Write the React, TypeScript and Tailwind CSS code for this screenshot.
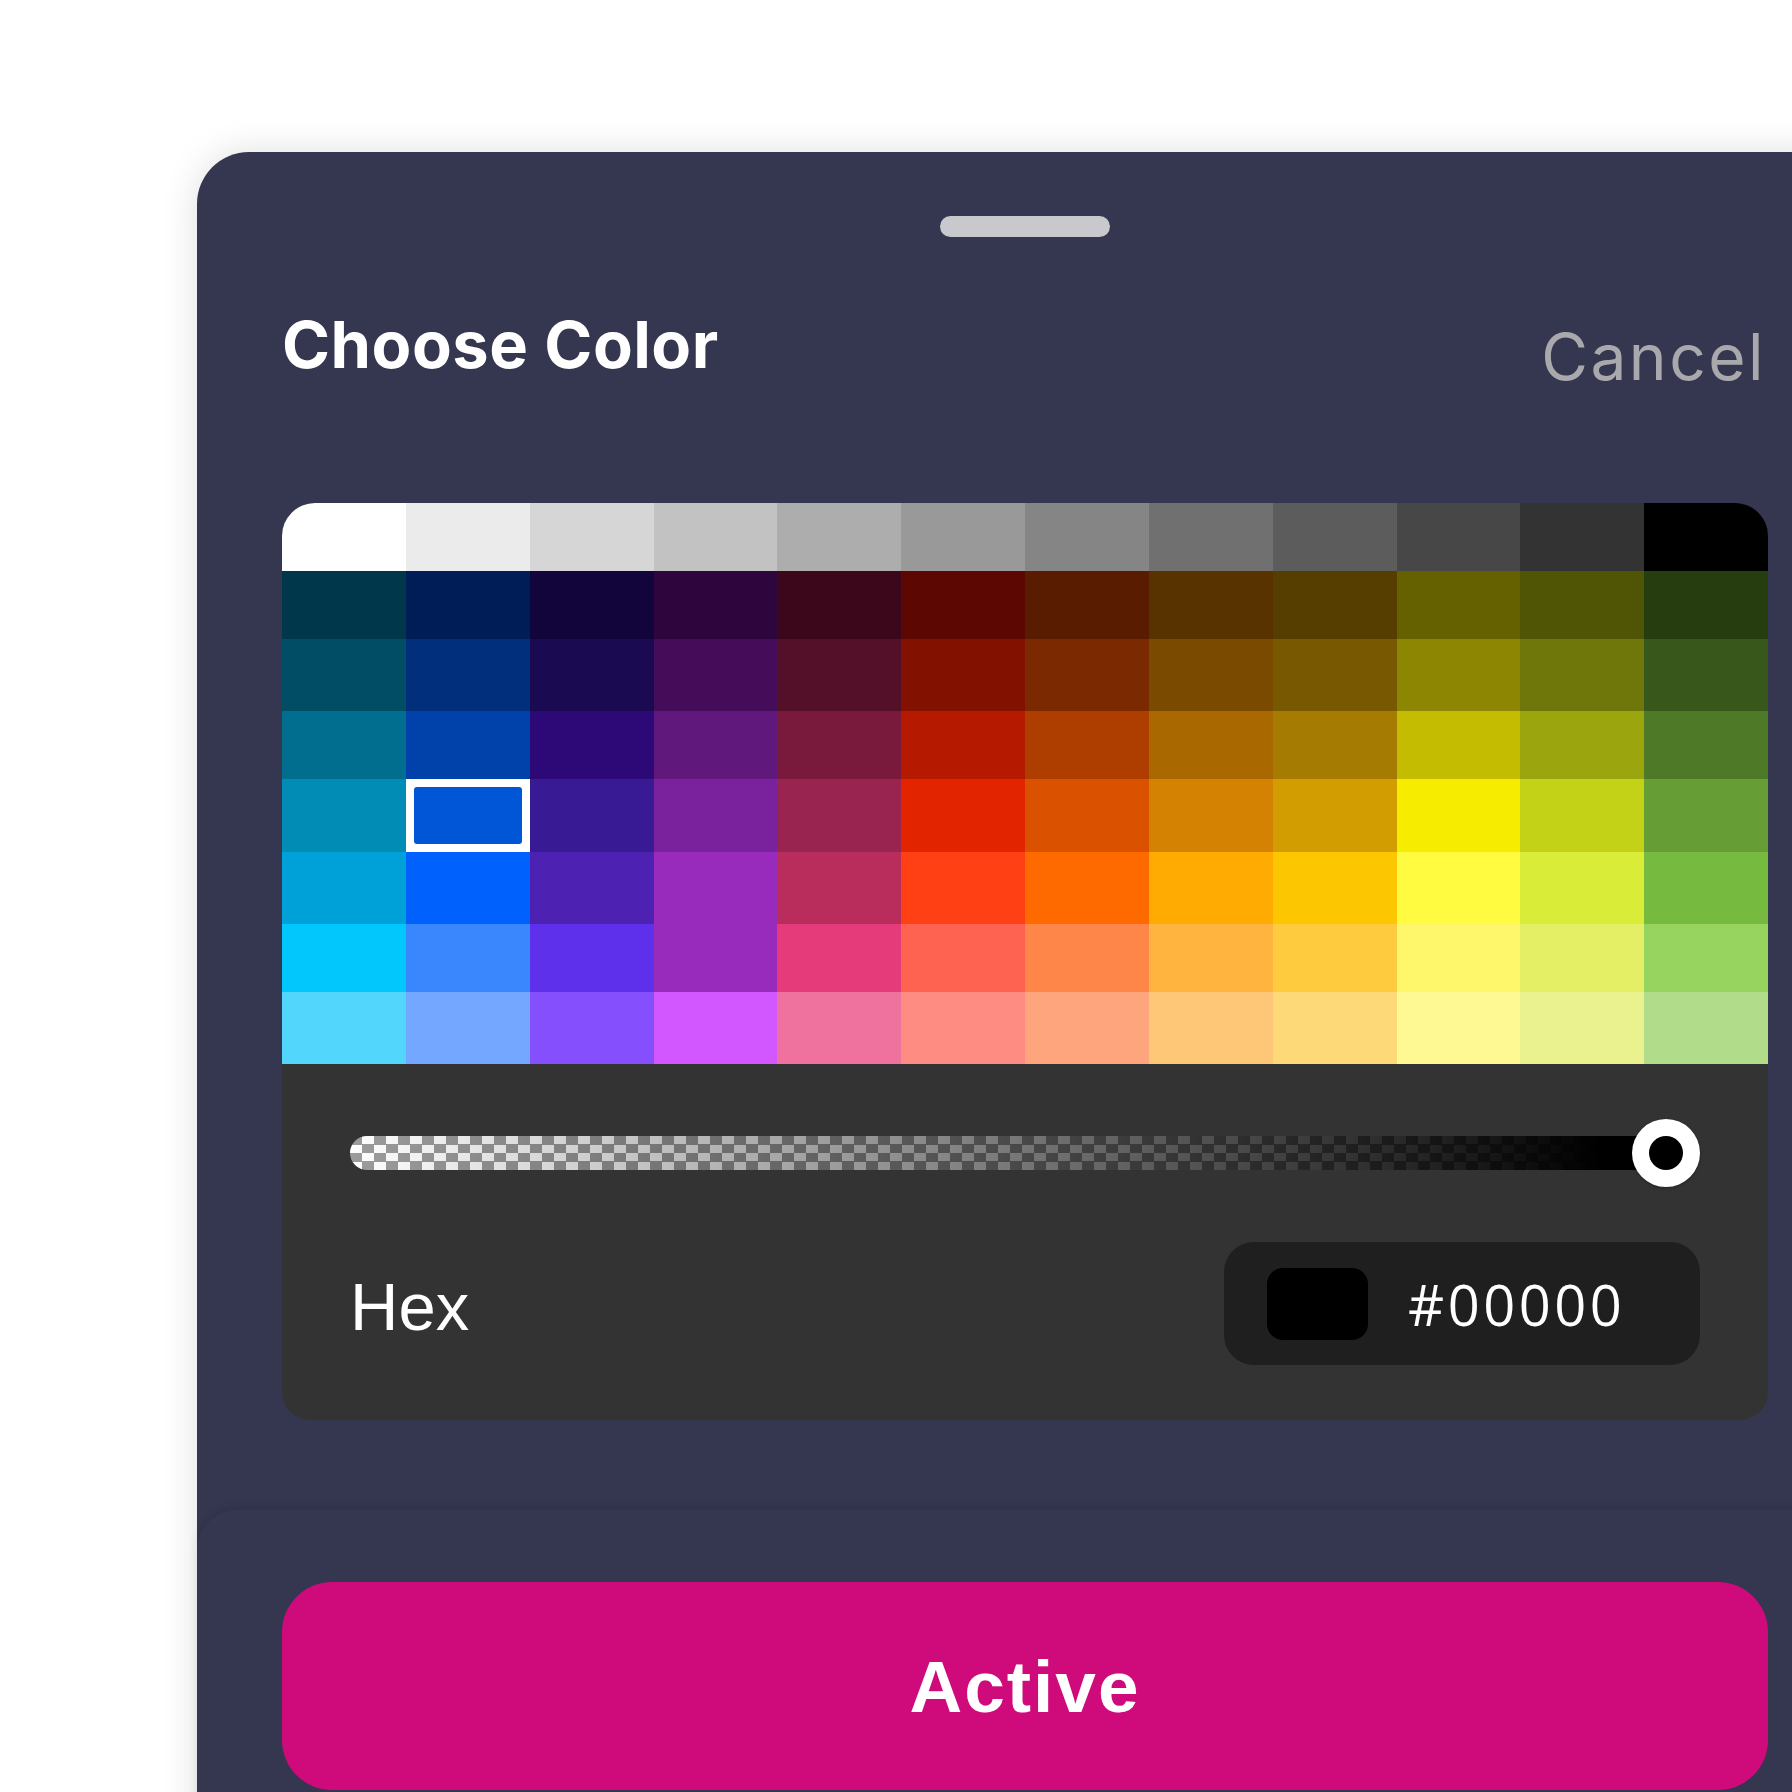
import React from "react";

const GRAY = ["#FFFFFF", "#EBEBEB", "#D6D6D6", "#C2C2C2", "#ADADAD", "#999999", "#858585", "#707070", "#5C5C5C", "#474747", "#333333", "#000000"];
const ROWS: string[][] = [
  ["#00374A", "#011D57", "#11053B", "#2E063D", "#3C071B", "#5C0701", "#5A1C00", "#583300", "#563D00", "#666100", "#4F5504", "#263E0F"],
  ["#004D65", "#012F7B", "#1A0A52", "#450D59", "#551029", "#831100", "#7B2900", "#7A4A00", "#785800", "#8D8602", "#6F760A", "#38571A"],
  ["#016E8F", "#0042A9", "#2C0977", "#61187C", "#791A3D", "#B51A00", "#AD3E00", "#A96800", "#A67B01", "#C4BC00", "#9BA50E", "#4E7A27"],
  ["#008CB4", "#0056D6", "#371A94", "#7A219E", "#99244F", "#E22400", "#DA5100", "#D38301", "#D19D01", "#F5EC00", "#C3D117", "#669D34"],
  ["#00A1D8", "#0061FD", "#4D22B2", "#982ABC", "#B92D5D", "#FF4015", "#FF6A00", "#FFAB01", "#FCC700", "#FEFB41", "#D9EC37", "#76BB40"],
  ["#01C7FC", "#3A87FD", "#5E30EB", "#982ABC", "#E63B7A", "#FE6250", "#FE8648", "#FEB43F", "#FECB3E", "#FFF76B", "#E4EF65", "#96D35F"],
  ["#52D6FC", "#74A7FF", "#864FFD", "#D357FE", "#EE719E", "#FF8C82", "#FEA57D", "#FEC777", "#FED977", "#FFF994", "#EAF28F", "#B1DD8B"],
];
const ROW_H = ["h-[68px]", "h-[68px]", "h-[72px]", "h-[68px]", "h-[73px]", "h-[72px]", "h-[68px]", "h-[72px]"];

export default function App() {
  return (
    <div className="w-[1792px] h-[1792px] bg-white overflow-hidden pl-[197px] pt-[152px]">
      <div className="w-[1700px] h-[1720px] bg-[#35364f] rounded-tl-[52px] shadow-[0_0_36px_rgba(0,0,0,0.13)] flex flex-col">
        <div className="pl-[85px] w-[1571px]">
          {/* handle */}
          <div className="mt-[64px] flex justify-center">
            <div className="w-[170px] h-[21px] rounded-full bg-[#c8c8cd]" />
          </div>
          {/* header */}
          <div className="mt-[75px] flex justify-between items-start">
            <div className="text-[65px] leading-none h-[65px] font-bold tracking-[0.5px] text-white" style={{ fontFamily: "Inter, sans-serif" }}>
              Choose Color
            </div>
            <div className="mt-[13px] mr-[2px] text-[64px] leading-none h-[64px] text-[#a9a9ad] tracking-[2.5px]" style={{ fontFamily: "Inter, sans-serif" }}>
              Cancel
            </div>
          </div>
          {/* picker */}
          <div className="mt-[114px] w-[1486px] rounded-t-[33px] rounded-b-[28px] overflow-hidden bg-[#333333]">
            <div className="grid grid-cols-12">
              {GRAY.map((c, i) => (
                <div key={"g" + i} className={ROW_H[0]} style={{ backgroundColor: c }} />
              ))}
              {ROWS.map((row, r) =>
                row.map((c, i) =>
                  r === 3 && i === 1 ? (
                    <div key={r + "-" + i} className={ROW_H[r + 1] + " bg-white p-[8px]"}>
                      <div className="w-full h-full rounded-[3px]" style={{ backgroundColor: c }} />
                    </div>
                  ) : (
                    <div key={r + "-" + i} className={ROW_H[r + 1]} style={{ backgroundColor: c }} />
                  )
                )
              )}
            </div>
            <div className="px-[68px] pt-[55px] pb-[55px]">
              {/* slider */}
              <div className="relative h-[68px]">
                <div className="absolute left-0 right-[20px] top-[17px] h-[34px] rounded-l-full bg-[linear-gradient(to_right,rgba(0,0,0,0),#000_94%),repeating-conic-gradient(#ffffff_0_25%,#9c9c9c_0_50%)] [background-size:100%_100%,24px_17px]" />
                <div className="absolute right-0 top-0 w-[68px] h-[68px] rounded-full bg-white flex items-center justify-center shadow-[0_1px_3px_rgba(0,0,0,0.3)]">
                  <div className="w-[34px] h-[34px] rounded-full bg-black" />
                </div>
              </div>
              {/* hex row */}
              <div className="mt-[55px] flex items-center justify-between">
                <div className="text-[67px] leading-none h-[67px] mt-[5px] text-white" style={{ fontFamily: '"Liberation Sans", Arial, sans-serif' }}>
                  Hex
                </div>
                <div className="w-[476px] h-[123px] rounded-[30px] bg-[#1f1f1f] flex items-center pl-[43px]">
                  <div className="w-[101px] h-[72px] rounded-[16px] bg-black" />
                  <div className="ml-[40px] text-[56px] leading-none tracking-[3.5px] text-white" style={{ fontFamily: '"Open Sans", sans-serif' }}>
                    #00000
                  </div>
                </div>
              </div>
            </div>
          </div>
        </div>
        {/* bottom section */}
        <div className="mt-[90px] flex-1 rounded-tl-[40px] bg-[#35364f] shadow-[0_-3px_10px_rgba(0,0,0,0.08)] pl-[85px] pt-[72px]">
          <div className="w-[1486px] h-[208px] rounded-[50px] bg-[#cf0b7c] flex items-center justify-center">
            <span className="text-[73px] leading-none font-bold tracking-[2px] text-white" style={{ fontFamily: '"Liberation Sans", Arial, sans-serif' }}>
              Active
            </span>
          </div>
        </div>
      </div>
    </div>
  );
}
